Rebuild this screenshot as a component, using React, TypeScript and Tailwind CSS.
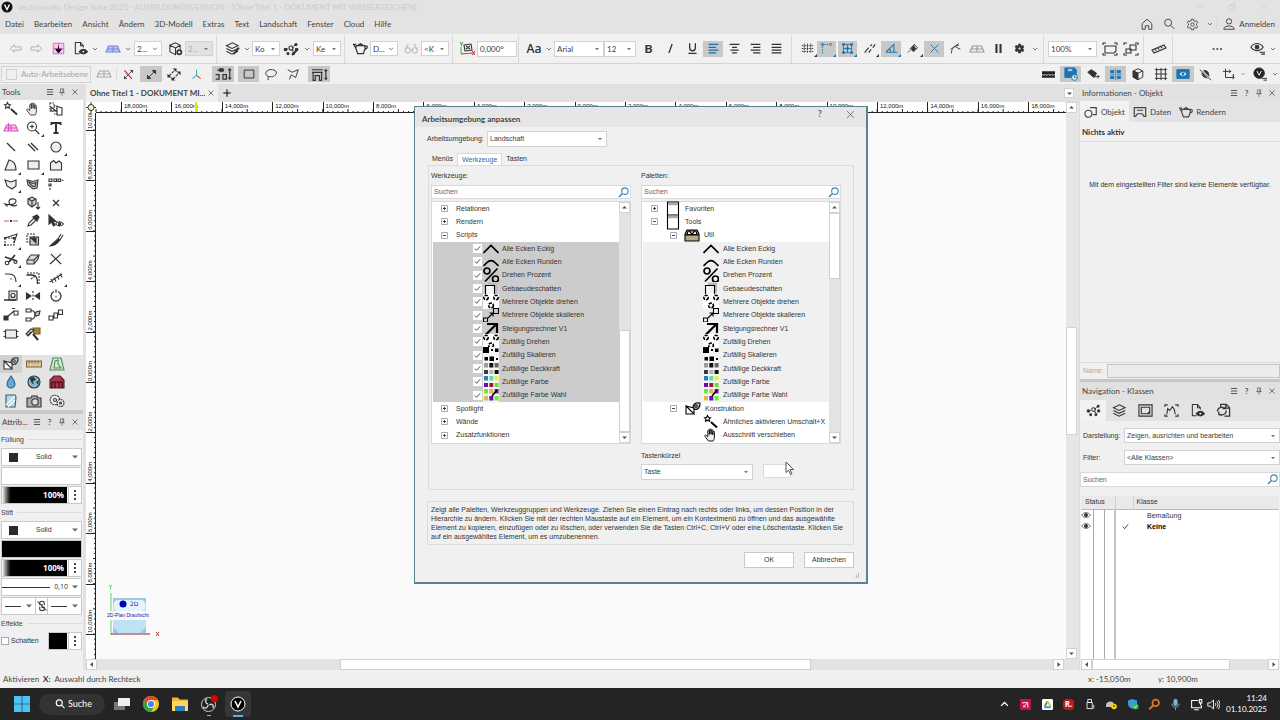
import { ReactNode, useState } from "react";
import clsx from "clsx";

const ui = "font-['Lato','Open_Sans',sans-serif]";
const small = "font-['Liberation_Sans',Arial,sans-serif]";

function Icon({
  children,
  className = "size-4",
}: {
  children: ReactNode;
  className?: string;
}) {
  return (
    <svg
      viewBox="0 0 16 16"
      fill="none"
      stroke="currentColor"
      strokeWidth="1.1"
      className={clsx("shrink-0", className)}
      aria-hidden="true"
    >
      {children}
    </svg>
  );
}

/* ---------- drawings ---------- */

const art = {
  plane: <path d="M3.500 5h9l2.500 6H1zM8 5v6M2.500 8h11" />,
  search: <path d="M7 2.500a4 4 0 1 0 0 8 4 4 0 1 0 0-8zM10 9.500l4 4" />,
  wand: (
    <>
      <path d="M4.500 1.500l1 2 2 .2-1.500 1.500.5 2-2-1-2 1 .5-2L1.500 3.700l2-.2z" />
      <path d="M8 8l6 5.500" strokeWidth="2" />
    </>
  ),
  hand: (
    <path
      d="M5.500 14L2 9.500c-.8-1.200.6-2 1.500-1l1.300 1.200V4c0-1.200 1.500-1.200 1.600 0V7.500 2.800c0-1.200 1.600-1.200 1.700 0V7.300 3.300c0-1.100 1.600-1.100 1.700 0V7.800 5c0-1.100 1.600-1.100 1.600 0V10c0 2-.6 3-1.200 4z"
      fill="#eee"
      strokeWidth=".9"
    />
  ),
  zoomIn: <path d="M7 2a4.500 4.500 0 1 0 0 9 4.500 4.500 0 1 0 0-9zM10.300 10l4 4M7 4.500v4M5 6.500h4" />,
  construct: (
    <>
      <path d="M1 5l8 8V7zM1 5v8h8" fill="#fff" />
      <path d="M8 6c0-3 3-5 7-4 .5 4-2 7-5 6.500z" fill="#a9c9d6" />
      <circle cx="11" cy="5" r="1.300" fill="#fff" />
    </>
  ),
  teapot: <path d="M4 6h8l-1 6.500H5zM4 7L1.500 5M4.500 9.500L1 6M12 7c3-1.500 3.500 2 .5 3M5 5.500c1-2.500 5-2.500 6 0M8 2.500v1" />,
  bigTeapot: <path d="M3.500 5h9l.5 3-2 5.500H5L3 8zM3 7.500L.5 3.500h3M13 5.500c3-1 3 2.500 0 3.500M5.500 4.500c1-1.500 4-1.500 5 0M8 2v1.500" strokeWidth="1.300" />,
  layers: <path d="M1.500 5L8 2l6 3-6.500 3zM1.500 8l6 3L14 8M1.500 11l6 3 6.500-3" />,
  classes: (
    <>
      <path d="M3 8l3 0M9 7l4-4M9 9l3 3" strokeDasharray="2 1" />
      <circle cx="2.500" cy="8.500" r="1.300" fill="currentColor" />
      <circle cx="8" cy="7" r="2" />
      <circle cx="13" cy="3.500" r="1" fill="currentColor" />
      <circle cx="13.500" cy="8.500" r="1.200" fill="currentColor" />
      <circle cx="5" cy="12.500" r="1" fill="currentColor" />
      <circle cx="10.500" cy="12.500" r="1" fill="currentColor" />
    </>
  ),
  docEye: (
    <>
      <path d="M7 13.500H2.500v-12H8l3 3.500v2" />
      <path d="M8 1.500v3.500h3" />
      <path d="M6.500 11.500c2.500-3.500 6.500-3.500 9 0-2.500 3-6.500 3-9 0z" fill="currentColor" />
      <circle cx="11" cy="11.300" r="1" fill="#fff" stroke="none" />
    </>
  ),
  gear: (
    <path
      d="M6.700 1.500h2.600l.4 2 1.500.8 1.900-.8 1.300 2.200-1.500 1.400v1.800l1.500 1.400-1.300 2.200-1.900-.8-1.500.8-.4 2H6.700l-.4-2-1.500-.8-1.900.8-1.300-2.200 1.500-1.400V7.100L1.600 5.700l1.300-2.200 1.900.8 1.500-.8zM8 6a2 2 0 1 0 0 4 2 2 0 1 0 0-4z"
      fillRule="evenodd"
    />
  ),
  book: (
    <>
      <path d="M2.500 1h11v14h-11z" fill="#fff" />
      <path d="M3 3h10" stroke="#aaa" strokeWidth="2.500" />
    </>
  ),
  chest: (
    <>
      <path d="M1 7l2-4h10l2 4v7H1z" fill="#b9a982" />
      <path d="M4 4h8l1 3.500H3z" fill="#fff" />
      <path d="M5 4l3 3 3-3M1 8h14" />
    </>
  ),
  eye: (
    <>
      <path d="M1 8c3.500-5 10.500-5 14 0-3.500 5-10.500 5-14 0z" />
      <circle cx="8" cy="8" r="2.600" fill="currentColor" />
    </>
  ),
};

type Tool = { name: string; art: ReactNode; more?: boolean };

const tools: Tool[] = [
  { name: "Ähnliches aktivieren", art: art.wand },
  { name: "Ausschnitt verschieben", art: art.hand },
  { name: "Aktivieren", art: <><path d="M2 2h4v8H2zM6 5h3v8H5.500" strokeDasharray="1.500 1" /><path d="M9 5.500l5 1.500v7H9zM3 6l5 4H3z" fill="#fff" /></> },
  { name: "Arbeitsebene", art: <g stroke="#e04fc0"><path d="M3.500 5h9l2.500 6H1zM5.500 3v8M8 5v6M2.500 8h11" fill="#f9c6ee" /></g> },
  { name: "Zoom", art: art.zoomIn, more: true },
  { name: "Text", art: <path d="M3.500 5V3h9v2M8 3v10M5.500 13h5" strokeWidth="2" /> },
  { name: "Linie", art: <path d="M4 4l8 8" strokeWidth="1.300" /> },
  { name: "Doppellinie", art: <path d="M3 5l7 7M6 4l7 7" strokeWidth="1.300" /> },
  { name: "Kreis", art: <circle cx="8" cy="8" r="5" fill="#eee" />, more: true },
  { name: "Bogen", art: <path d="M2 13L6 3c5 1 7 5 7 10z" fill="#eee" />, more: true },
  { name: "Rechteck", art: <path d="M3 4h11v8H3z" fill="#eee" />, more: true },
  { name: "Polygon", art: <path d="M2.500 13V6l3-2.500L8 6l3-2 2.500 2v7z" fill="#eee" /> },
  { name: "Polylinie", art: <path d="M2 4l6 2 5-2v6l-4 3-5-3z" fill="#eee" />, more: true },
  { name: "Doppelpolygon", art: <path d="M2 4l6 1.500 5-1.500-1 8-4 1-5-4zM4 6l4 1.500L11 6.500l-1 4H8L5.500 8.500z" fill="#ccc" /> },
  { name: "Dokumentpfad", art: <path d="M1 3h3v2.500H1zM6 3h2.500v2.500H6zM10 3h2.500v2.500H10zM13.500 4.300h2M1 8h2v2H1zM2 12v2" /> },
  { name: "Freihand", art: <path d="M14 10c-3 2-8 0-8-3 0-4 7-4 7-1 0 4-7 4-11 3l2.500 2.500" /> },
  { name: "Verteilen", art: <><path d="M3 4l4-2 4 2v5l-4 3-4-3z" fill="#ccc" /><path d="M7 6v6M3 4l4 2 4-2M13 7v7M11 12l2 2 2-2" /></> },
  { name: "Fixpunkt", art: <path d="M5 5l6 6M11 5l-6 6" strokeWidth="1.300" /> },
  { name: "Hilfslinie", art: <><path d="M1 8h5M10 8h5" stroke="#d649ae" /><path d="M7 8h2" strokeWidth="2" /></> },
  { name: "Pipette", art: <><path d="M3 13l1-3 5-5 2 2-5 5z" /><path d="M8 4l4 4 2-4-2-2z" fill="currentColor" /></> },
  { name: "Sichtbarkeit", art: <><path d="M1 2v9l2.500-2 2 4 1.500-1-2-3.500h3z" fill="currentColor" /><path d="M7.500 11c2-3 5.500-3 8 0-2 2.500-6 2.500-8 0z" fill="#fff" /><circle cx="11.500" cy="11" r="1.200" fill="currentColor" /></> },
  { name: "Umformen", art: <><path d="M2 6h9v7H2z" strokeDasharray="2 1" /><path d="M2 6l12-4-3 9" /><path d="M1 5h2v2H1zM10 5h2v2h-2zM1 12h2v2H1z" fill="currentColor" stroke="none" /></>, more: true },
  { name: "Ausschneiden", art: <><path d="M2 2h7v8H2z" strokeDasharray="2 1" /><path d="M5 5h8.500v8H5z" fill="#ccc" /><path d="M6 6h5v5z" fill="currentColor" /></> },
  { name: "Messer", art: <><path d="M2 14l8-7 2 1c-3 4-6 6-10 6z" fill="currentColor" /><path d="M10 7l3-5M12 8l3-5" /></> },
  { name: "Schere", art: <><path d="M2 6l12 4M12 4L6 11" strokeWidth="1.800" /><circle cx="4" cy="12" r="1.800" /><circle cx="12.500" cy="11" r="1.500" /></>, more: true },
  { name: "Radierer", art: <><path d="M2 9l4-5h8l-1 4-4 5H2z" fill="#ddd" /><path d="M2 9h7l5-5M9 9v4" /></> },
  { name: "Trimmen", art: <path d="M3 3l10 10M13 3L2 13" /> },
  { name: "Abrunden", art: <><path d="M2 4h4c5 0 7 3 7 8" strokeWidth="1.200" /><path d="M7.500 9h1" strokeWidth="1.500" /></>, more: true },
  { name: "Fase", art: <><path d="M1.500 5h5c5 0 6 3 6 9" strokeWidth="1.300" /><path d="M2 3h12v11M6 9l4-3" strokeDasharray="2 1" /></> },
  { name: "Teilen", art: <path d="M1.500 12L14 4M3 9l2 4M6 7.500l2 4M9 5.500l2 4M12 3.500l2 4" />, more: true },
  { name: "Maßband", art: <><path d="M6 3h8v9H6z" fill="#ddd" /><path d="M1 12h12" strokeWidth="1.500" /><circle cx="10" cy="7.500" r="2" fill="#fff" /></> },
  { name: "Spiegeln", art: <><path d="M1.500 5v6L6 8zM14.500 5v6L10 8z" fill="currentColor" /><path d="M8 3v10" strokeDasharray="2 1.500" /></> },
  { name: "Rotieren", art: <path d="M10 3.500a5 5 0 1 1-4 0M8 1.500v3M7.500 8.500h1" strokeWidth="1.300" /> },
  { name: "Verschieben", art: <><path d="M4 10l7-6" /><path d="M1 9h4v4H1z" fill="currentColor" /><path d="M11 4h4v4h-4zM9 1.500h3" /></> },
  { name: "Verbinden", art: <><path d="M1 2h5v3H1zM1 11h5v3H1zM6 3.500c3 0 4 2 4 4.500S8 12.500 6 12.500" /><path d="M10 8l1-3 4-1-1 4-3 1z" fill="#ccc" /></> },
  { name: "Pfadduplikat", art: <path d="M1 9h4v4H1zM6 6h3.500v5H6zM10.500 3h4v4.500h-4zM5 11l1.500-1M9.500 8l1-1" /> },
  { name: "Symbol", art: <><path d="M2.500 4h11v8h-11z" fill="#eee" /><path d="M1.500 5v1M1.500 10v1M14.500 5v1M14.500 10v1" strokeWidth="2" /></> },
  { name: "Attribute übertragen", art: <><path d="M8 2h7v6H9z" fill="#a8843a" stroke="#775a20" /><path d="M1 8l5-5 3 1-6 6zM3 9l3-3" fill="#eee" /><path d="M8 8l5 6" strokeWidth="2" /></> },
];

const toolSets: Tool[] = [
  { name: "Konstruktion", art: art.construct },
  { name: "Bemaßung", art: <><path d="M.5 5h15v6H.5z" fill="#dcc79a" stroke="#7b6534" /><path d="M3 5v2.500M6 5v2.500M9 5v2.500M12 5v2.500" stroke="#7b6534" /></> },
  { name: "Landschaft", art: <path d="M4 2h8l3 12H1zM5 12l1-7 3-1v4l3 4z" fill="#d5ead5" stroke="#4d8a55" /> },
  { name: "Wasser", art: <path d="M8 2c2 3 4 5 4 8a4 4 0 0 1-8 0c0-3 2-5 4-8z" fill="#5fa8d8" stroke="#2e6387" /> },
  { name: "GIS", art: <><circle cx="8" cy="8" r="6" fill="#8ab9d3" /><path d="M4 4l4-1 2 3-3 1 1 4-3-3zM10 8l3-2-1 5z" fill="#1d3a4a" stroke="none" /></> },
  { name: "Gebäude", art: <><path d="M1 14V6l4-4h6l4 4v8z" fill="#a8384a" stroke="#5b1622" /><path d="M3 14V8h3v6M10 14V8h3v6M6 8h4" stroke="#3b0a12" /></> },
  { name: "Fenster", art: <><path d="M3 2h9l1 2-1 10H3z" fill="#b5d9ea" stroke="#355c70" /><path d="M3 12l9-9M5 14l7-7" stroke="#fff" /></> },
  { name: "Visualisierung", art: <><path d="M1 5h4l1-2h5l1 2h3v9H1z" fill="#aaa" /><circle cx="9" cy="9" r="3.200" fill="#ddd" /></> },
  { name: "Maschinenbau", art: <g fill="#eee"><circle cx="6" cy="7" r="4.800" strokeDasharray="2 .7" /><circle cx="11.500" cy="10" r="3.500" strokeDasharray="2 .7" /><circle cx="6" cy="7" r="1.500" /><circle cx="11.500" cy="10" r="1" /></g> },
];

const swatches: Record<string, string[]> = {
  opacity: ["#9b9b9b", "#111", "#666", "#3b3b3b", "#b5b5b5", "#111"],
  color: ["#2f78c4", "#55e0b4", "#e6ef4a", "#6a0dad", "#b01030", "#62df45"],
  pick: ["#62ef35", "#e2b350", "#7a0fb0", "#e2b350", "#6a0dad", "#62ef35"],
};

const Swatches = ({ colors }: { colors: string[] }) => (
  <g stroke="none">
    <rect width="16" height="16" fill="#f6f6f6" />
    {colors.map((fill, i) => (
      <rect key={i} x={1 + (i % 3) * 5.3} y={i < 3 ? 2 : 9} width="4" height="4.500" fill={fill} />
    ))}
  </g>
);

const rings = (
  <g>
    <rect width="16" height="16" fill="#fff" stroke="none" />
    <circle cx="3" cy="3.500" r="2.200" strokeWidth="1.600" strokeDasharray="3 1" />
    <circle cx="13" cy="3.500" r="2.200" strokeWidth="1.600" strokeDasharray="3 1" />
    <circle cx="8" cy="11.500" r="2.400" strokeWidth="1.600" strokeDasharray="3 1" />
  </g>
);

const scripts: Tool[] = [
  { name: "Alle Ecken Eckig", art: <path d="M.5 12L8 4.500l7.500 7.500" strokeWidth="1.700" /> },
  { name: "Alle Ecken Runden", art: <path d="M.5 12l3.500-3.500c2.500-2.500 5.500-2.500 8 0l3.500 3.500" strokeWidth="1.700" /> },
  { name: "Drehen Prozent", art: <g strokeWidth="1.700"><circle cx="4" cy="4" r="3" /><circle cx="12.500" cy="12" r="3" /><path d="M14.500 1.500L2 14.500" /></g> },
  { name: "Gebaeudeschatten", art: <><path d="M5 1.500h9v10H5z" fill="#bbb" stroke="none" /><path d="M2.500 4.500h9v9h-9z" fill="#f5f5f5" /></> },
  { name: "Mehrere Objekte drehen", art: rings },
  { name: "Mehrere Objekte skalieren", art: <><path d="M.5 11h4v4h-4zM10.500 1.500h5v5h-5z" /><path d="M5 11l5-5M6.500 6H10v3.500" /></> },
  { name: "Steigungsrechner V1", art: <path d="M2 14.500L13 3.500M4 3h10v9" strokeWidth="2.200" /> },
  { name: "Zufällig Drehen", art: rings },
  { name: "Zufällig Skalieren", art: <g stroke="none"><rect width="16" height="16" fill="#f6f6f6" /><path d="M0 0h6v6H0zM8 2h2v2H8zM12 1.500h3.500v3.500H12zM1.500 10h3.500v3.500H1.500zM6.500 9.500h4.500v4.500H6.500zM13 11h2v2h-2z" fill="#000" /></g> },
  { name: "Zufällige Deckkraft", art: <Swatches colors={swatches.opacity} /> },
  { name: "Zufällige Farbe", art: <Swatches colors={swatches.color} /> },
  { name: "Zufällige Farbe Wahl", art: <><Swatches colors={swatches.pick} /><path d="M9 9l5-6" strokeWidth="1.600" /></> },
];

/* ---------- small controls ---------- */

function Slot({
  name,
  on,
  more,
  className = "w-5",
  children,
}: {
  name: string;
  on?: boolean;
  more?: boolean;
  className?: string;
  children: ReactNode;
}) {
  return (
    <button
      type="button"
      title={name}
      aria-label={name}
      className={clsx(
        "relative flex h-4 shrink-0 items-center justify-center",
        on && "bg-[#c8c8c8]",
        className
      )}
    >
      {children}
      {more && (
        <svg viewBox="0 0 4 4" className="absolute right-0 bottom-0 size-[3px]" aria-hidden="true">
          <path d="M4 0v4H0z" fill="currentColor" />
        </svg>
      )}
    </button>
  );
}

function Chevron({ className = "w-[10px]" }: { className?: string }) {
  return (
    <button type="button" aria-label="Mehr" className={clsx("flex h-4 shrink-0 items-center justify-center", className)}>
      <svg viewBox="0 0 8 8" className="size-2" fill="none" stroke="#777" aria-hidden="true">
        <path d="M2 3l2 2 2-2" />
      </svg>
    </button>
  );
}

const Sep = ({ className = "" }: { className?: string }) => (
  <span className={clsx("w-px shrink-0 bg-[#dadada]", className)} />
);

function Drop({
  name,
  value,
  className,
  id,
  caret = true,
  disabled,
}: {
  name?: string;
  value: string;
  className?: string;
  id?: string;
  caret?: boolean;
  disabled?: boolean;
}) {
  return (
    <span className={clsx("relative block shrink-0", className)}>
      <select
        id={id}
        aria-label={name}
        disabled={disabled}
        className="block size-full appearance-none border border-[#d2d2d2] bg-white pr-2 pl-[2px] text-[#3c3c3c] disabled:bg-[#e2e2e2] disabled:text-[#aaa]"
      >
        <option>{value}</option>
      </select>
      <svg viewBox="0 0 6 4" className="pointer-events-none absolute top-1/2 right-1 h-1 w-[6px] -translate-y-1/2" aria-hidden="true">
        {caret ? (
          <path d="M1 1h4L3 3.200z" fill="#777" />
        ) : (
          <path d="M1 .8l2 2 2-2" fill="none" stroke="#777" />
        )}
      </svg>
    </span>
  );
}

function ScrollButton({ dir, className = "size-[11px]" }: { dir: "up" | "down" | "left" | "right"; className?: string }) {
  const d = {
    up: "M2 5.500h5L4.500 3z",
    down: "M2 3.500h5L4.500 6z",
    left: "M6 2v5L3 4.500z",
    right: "M3.500 2v5l3-2.500z",
  }[dir];
  return (
    <button type="button" aria-label={dir} className={clsx("flex shrink-0 items-center justify-center border border-[#d2d2d2] bg-white", className)}>
      <svg viewBox="0 0 9 9" className="size-[9px] shrink-0" aria-hidden="true">
        <path d={d} fill="#555" />
      </svg>
    </button>
  );
}

function PanelHeader({ title, help, className }: { title: string; help?: boolean; className?: string }) {
  return (
    <div className={clsx("flex shrink-0 items-center bg-[#e1e1e1] pr-[2px] pl-[2px] text-[8px] text-[#444]", className)}>
      <h2 className="min-w-0 flex-1 whitespace-nowrap">{title}</h2>
      <Slot name="Menü" className="w-3">
        <Icon className="size-[10px]"><path d="M3 4h10M3 8h10M3 12h10" strokeWidth="1.400" /></Icon>
      </Slot>
      {help && (
        <Slot name="Hilfe" className="w-[13px]">
          <span className="font-bold text-[#555]">?</span>
        </Slot>
      )}
      <Slot name="Anheften" className="w-3">
        <Icon className="size-[10px] text-[#666]"><path d="M5.500 3h5v6h-5zM3.500 9h9M8 9v5M9.500 3v6" strokeWidth="1.200" /></Icon>
      </Slot>
      <Slot name="Schließen" className="w-[13px]">
        <Icon className="size-[10px] text-[#555]"><path d="M4 4l8 8M12 4l-8 8" strokeWidth="1.300" /></Icon>
      </Slot>
    </div>
  );
}

function SearchBox({ name, className }: { name: string; className?: string }) {
  return (
    <div className={clsx("flex items-center border border-[#d9d9d9] bg-white", className)}>
      <input type="search" aria-label={name} placeholder="Suchen" className="min-w-0 flex-1 pl-[2px] outline-none placeholder:text-[#666]" />
      <svg viewBox="0 0 12 12" className="mr-px size-[11px]" fill="none" stroke="#3c86b4" strokeWidth="1.200" aria-hidden="true">
        <circle cx="7.500" cy="4.500" r="3.500" />
        <path d="M5 7l-4 4" strokeWidth="1.600" />
      </svg>
    </div>
  );
}

/* ---------- window chrome ---------- */

const menus = ["Datei", "Bearbeiten", "Ansicht", "Ändern", "3D-Modell", "Extras", "Text", "Landschaft", "Fenster", "Cloud", "Hilfe"];

function TitleAndMenu() {
  return (
    <header className="shrink-0 bg-[#e3e3e3] text-[#444]">
      <div className="flex h-[14px] items-center pr-3 pl-px text-[#cbcbcb]">
        <svg viewBox="0 0 12 12" className="mr-1 size-3" aria-hidden="true">
          <circle cx="6" cy="6" r="5.500" fill="#111" />
          <path d="M3.500 3.500L6 8.500l2.500-5" fill="none" stroke="#fff" strokeWidth="1.400" />
        </svg>
        <h1 className="flex-1 truncate">
          Vectorworks Design Suite 2025 - AUSBILDUNGSVERSION - [Ohne Titel 1 - DOKUMENT MIT WASSERZEICHEN]
        </h1>
        <div className="flex gap-6">
          <button type="button" aria-label="Minimieren"><Icon className="size-2"><path d="M3 8h10" /></Icon></button>
          <button type="button" aria-label="Verkleinern"><Icon className="size-2"><path d="M2 5h9v9H2zM5 5V2h9v9h-3" /></Icon></button>
          <button type="button" aria-label="Schließen"><Icon className="size-2"><path d="M2 2l12 12M14 2L2 14" /></Icon></button>
        </div>
      </div>
      <div className="flex h-5 items-center pr-[5px] pl-[5px]">
        <nav className="flex flex-1 gap-[10px]">
          {menus.map((menu) => (
            <button key={menu} type="button">{menu}</button>
          ))}
        </nav>
        <Slot name="Startseite" className="w-[22px]"><Icon className="size-[14px]"><path d="M2.500 7.500L8 2.500l5.500 5V14H10v-4H6v4H2.500z" /></Icon></Slot>
        <Slot name="Suchen" className="w-[22px]"><Icon className="size-[14px]">{art.search}</Icon></Slot>
        <Slot name="Einstellungen" className="w-[25px]"><Icon className="size-[13px]">{art.gear}</Icon></Slot>
        <Chevron />
        <Sep className="mr-[5px] ml-px h-3" />
        <button type="button" className="flex items-center gap-[3px]">
          <Icon className="size-[14px]"><circle cx="8" cy="5" r="3" /><path d="M2 14c0-5 12-5 12 0z" /></Icon>
          Anmelden
        </button>
      </div>
    </header>
  );
}

const lines = (d: string) => <Icon className="size-[13px]"><path d={d} strokeWidth="1.600" /></Icon>;

function MainToolbar() {
  return (
    <div role="toolbar" aria-label="Darstellung" className="flex h-[30px] shrink-0 items-center border-b border-[#d4d4d4] bg-[#f1f1f1] pl-[5px] text-[#333]">
      <Slot name="Zurück" className="w-[21px] text-[#aaa]"><Icon className="size-[13px]"><path d="M1.500 8l5-4.500V6h8v4h-8v2.500z" /></Icon></Slot>
      <Slot name="Vor" className="w-[21px] text-[#aaa]"><Icon className="size-[13px]"><path d="M14.500 8l-5-4.500V6h-8v4h8v2.500z" /></Icon></Slot>
      <Slot name="Ebene sichern" className="w-[23px]"><Icon className="size-[13px]"><path d="M1.500 1.500h13v13h-13zM8 1.500V6M1.500 8h13" fill="#f8c8ee" stroke="#e060c0" /><path d="M8 5v6M4.500 9L8 13.500 11.500 9z" fill="#111" stroke="#111" strokeWidth="1.200" /></Icon></Slot>
      <Slot name="Dokument anzeigen"><Icon className="size-[15px]">{art.docEye}</Icon></Slot>
      <Chevron />
      <Slot name="Arbeitsebene" className="ml-[3px] w-5"><Icon><g stroke="#7487d8" fill="#b9c7f4">{art.plane}</g></Icon></Slot>
      <Chevron />
      <Drop name="Ebene" value="2..." caret={false} className="ml-px h-[15px] w-7" />
      <Slot name="3D" className="ml-[3px] w-5"><Icon className="size-[15px]"><path d="M2 4.500L8 2l5 2.500V9M2 4.500v7l6 3V7.500zM8 7.500l5-3" /><circle cx="12" cy="12" r="2.300" strokeWidth="1.800" /></Icon></Slot>
      <Drop name="3D Ansicht" value="2..." disabled className="h-[15px] w-7" />
      <Sep className="mr-[5px] ml-[3px] h-7" />
      <Slot name="Ebenen"><Icon className="size-[15px]">{art.layers}<path d="M9 14l6-7" strokeWidth="2" /></Icon></Slot>
      <Chevron />
      <Drop name="Konstruktionsebene" value="Ko" className="h-[15px] w-7" />
      <Slot name="Klassen" className="ml-px w-5"><Icon>{art.classes}<path d="M9 14l6-6" strokeWidth="2" /></Icon></Slot>
      <Chevron className="w-[11px]" />
      <Drop name="Klasse" value="Ke" className="ml-px h-[15px] w-7" />
      <Sep className="mr-[5px] ml-[3px] h-7" />
      <Slot name="Rendern"><Icon className="size-[15px]">{art.bigTeapot}</Icon></Slot>
      <Drop name="Darstellungsart" value="D..." caret={false} className="h-[15px] w-7" />
      <Slot name="Stil" className="ml-[3px] w-5 text-[#bbb]"><Icon className="size-[15px]"><circle cx="4" cy="10" r="2.700" /><circle cx="11.500" cy="10" r="2.700" /><path d="M1.500 9l3-6M14 9l-3-6M6.500 10h2" /></Icon></Slot>
      <Drop name="Stilklasse" value="<K" className="h-[15px] w-7" />
      <Sep className="mr-[4px] ml-[3px] h-7" />
      <Slot name="Plandrehung"><Icon><path d="M5 4l7-1 1 6-7 1zM7 5l4 3M11 5L7 8" /><path d="M2 6v7" stroke="#4ab54a" /><path d="M2 13l11-1" stroke="#d43a3a" /><path d="M1 1l1.500 2L4 1M2.500 3v2" stroke="#4ab54a" /><path d="M13 10l3 4M16 10l-3 4" stroke="#d43a3a" /></Icon></Slot>
      <input aria-label="Drehwinkel" defaultValue="0,000°" className="h-4 w-10 shrink-0 border border-[#cfcfcf] bg-white pl-[2px]" />
      <Sep className="mr-[5px] ml-px h-7" />
      <Slot name="Schrift"><span className="font-['Open_Sans',sans-serif] text-[12px] font-semibold">Aa</span></Slot>
      <Chevron />
      <Drop name="Schriftart" value="Arial" className="h-4 w-[50px]" />
      <Drop name="Schriftgröße" value="12" className="h-4 w-8" />
      <Slot name="Fett" className="ml-[2px] w-[21px] text-[12px]"><b className="font-black">B</b></Slot>
      <Slot name="Kursiv" className="w-[22px]">{lines("M10 2.500L6 13.500")}</Slot>
      <Slot name="Unterstrichen" className="w-[22px]">{lines("M4.500 1.500V7c0 5 7 5 7 0V1.500M3 14h10")}</Slot>
      <Slot name="Linksbündig" on className="w-5 text-[#1c6ea8]">{lines("M2 3h12M2 6.500h9M2 10h12M2 13.500h9")}</Slot>
      <Slot name="Zentriert" className="ml-px w-[21px]">{lines("M2 3h12M5 6.500h6M3 10h10M5 13.500h6")}</Slot>
      <Slot name="Rechtsbündig" className="w-[21px]">{lines("M2 3h12M5 6.500h9M2 10h12M5 13.500h9")}</Slot>
      <Slot name="Blocksatz" className="w-[21px]">{lines("M2 3h12M2 6.500h12M2 10h12M2 13.500h12")}</Slot>
      <Sep className="mr-[5px] ml-[4px] h-7" />
      <Slot name="Raster" more><Icon className="size-[13px]"><path d="M4 2v12M8 2v12M12 2v12M1 4.500h14M1 8h14M1 11.500h14" strokeDasharray="2 1" /></Icon></Slot>
      <Slot name="Objekt fangen" on more className="w-[19px] text-[#1c75b0]"><Icon className="size-[13px]"><path d="M3 14V3h9" strokeDasharray="2 1.200" /><circle cx="3" cy="3" r="1.500" /><circle cx="13" cy="3" r="1.300" /></Icon></Slot>
      <Slot name="Kanten fangen" on more className="ml-[2px] w-[19px] text-[#1c75b0]"><Icon className="size-[13px]"><path d="M3 3h10v10H3zM8 3v10M3 8h10" /><path d="M2 2h2v2H2zM12 2h2v2h-2zM2 12h2v2H2zM12 12h2v2h-2zM7 7h2v2H7z" fill="currentColor" /></Icon></Slot>
      <Slot name="Verlängerung fangen" more className="ml-[2px] w-[20px]"><Icon className="size-[13px]"><path d="M2 13l5-6M9 5l2-2M7 13l3-4M12 7l3-4" strokeWidth="1.400" /></Icon></Slot>
      <Slot name="Winkel fangen" on more className="ml-[2px] w-[20px] text-[#1c75b0]"><Icon className="size-[13px]"><path d="M1 12.500h14M1.500 12L11 3v9M5 9c2 0 2 2 2 3" strokeWidth="1.300" /></Icon></Slot>
      <Slot name="Punkt fangen" more className="ml-[2px] w-[20px]"><Icon className="size-[13px]"><path d="M4 8l5-5 4 4-5 5zM1 13l3-3M9 3l-2 8" /><path d="M8 5l3 3-3 3-3-3z" fill="currentColor" /></Icon></Slot>
      <Slot name="Schnittpunkt fangen" on className="ml-px w-5 text-[#1c75b0]"><Icon className="size-[13px]"><path d="M3 3l10 10M13 3L3 13" /></Icon></Slot>
      <Slot name="Tangente fangen" className="w-[22px]"><Icon className="size-[13px]"><path d="M3 14c0-5 2-9 9-10M2 9l10-7M8 6l6 3" /></Icon></Slot>
      <Slot name="Ebene fangen" className="w-[22px] text-[#999]"><Icon>{art.plane}</Icon></Slot>
      <Slot name="Pause" className="w-[21px]"><Icon className="size-[13px]"><path d="M5.500 2.500v11M10.500 2.500v11" strokeWidth="2.600" /></Icon></Slot>
      <Slot name="Einstellungen" className="w-[21px]"><Icon className="size-[11px]"><g fill="currentColor">{art.gear}</g></Icon></Slot>
      <Chevron />
      <Sep className="mr-[4px] ml-[3px] h-7" />
      <Drop name="Zoomfaktor" value="100%" className="h-4 w-[49px]" />
      <Slot name="Plangröße" className="ml-[2px] w-[21px]"><Icon><path d="M3 5h11v5l-2 2H3z" /><path d="M1 4V2h3M12 2h3v2M1 12v2h3M15 12v2h-3" /></Icon></Slot>
      <Slot name="Objekte zeigen" className="w-[21px]"><Icon><path d="M7 4h6v5H7zM3 8h5v4H3z" /><path d="M1 4V2h3M12 2h3v2M1 12v2h3M15 12v2h-3" /></Icon></Slot>
      <Sep className="mr-[5px] ml-[2px] h-7" />
      <Slot name="Maßstab"><Icon><path d="M1 9l12-5 2 3L3 12zM4 8l1 1.500M7 7l1 1.500M10 5.500l1 1.500" fill="#ddd" /></Icon></Slot>
      <Sep className="ml-[3px] h-7" />
      <Slot name="Mehr" className="ml-auto w-5"><Icon className="size-[10px]"><path d="M1 8h3M7 8h3M13 8h3" strokeWidth="2.500" /></Icon></Slot>
      <Slot name="Sichtbarkeit" className="ml-5 w-5"><Icon className="size-[15px]"><path d="M1 6.500c3.500-5 9.500-5 13 0-3.500 5-9.500 5-13 0z" /><circle cx="7.500" cy="6.500" r="2" fill="currentColor" /><path d="M10 12h6M12 14h4" /></Icon></Slot>
      <Chevron className="mr-[2px] w-[11px]" />
    </div>
  );
}

function ModeBar() {
  return (
    <div role="toolbar" aria-label="Methoden" className="flex h-5 shrink-0 items-center bg-[#f0f0f0] pl-px text-[#333]">
      <label className="flex h-[17px] w-[90px] shrink-0 items-center gap-1 border border-[#d4d4d4] pl-1 text-[#a5a5a5]">
        <input type="checkbox" disabled className="size-[11px] shrink-0 appearance-none border border-[#d0d0d0]" />
        <span className="whitespace-nowrap">Auto-Arbeitsebene</span>
      </label>
      <Slot name="Arbeitsebene" className="ml-[3px] w-5 text-[#aaa]"><Icon>{art.plane}</Icon></Slot>
      <Sep className="mr-px ml-[2px] h-3" />
      <Slot name="Ohne Punkte" className="w-[21px]"><Icon className="size-[13px]"><path d="M3 13L13 3M10 3h3v3M3 10v3h3" /><path d="M3 3l9 10" stroke="#cc2424" strokeWidth="1.500" /></Icon></Slot>
      <Slot name="Einzelpunkte" on className="ml-px w-[22px]"><Icon className="size-[13px]"><path d="M3 13L13 3" /><path d="M9 3h4v4zM3 9v4h4z" fill="currentColor" /></Icon></Slot>
      <Slot name="Mehrere Punkte" className="w-[23px]"><Icon><path d="M3 10l6-6M7 13l6-6" strokeDasharray="3 1" /><path d="M8 3h2v2zM12 6h2v2zM2 9v2h2zM6 12v2h2z" fill="currentColor" /></Icon></Slot>
      <Slot name="Achsen" className="w-[23px]"><Icon className="size-[13px]"><path d="M8 2v7" stroke="#2eb5a0" strokeWidth="1.300" /><path d="M8 9l-5 4" stroke="#4aa0e0" strokeWidth="1.300" /><path d="M8 9l5 4" stroke="#cc3a3a" strokeWidth="1.300" /></Icon></Slot>
      <Slot name="Verbunden" on className="ml-1 w-[22px]"><Icon className="size-[18px]"><path d="M1.500 8.500h3v4h-3M8 8.500h3v4H8zM3 4.500h6" /><path d="M5 3.500h3v2H5z" fill="currentColor" /><path d="M14 3.500v9M12.800 4.800L14 3.500l1.200 1.300M12.800 11.200l1.200 1.300 1.200-1.300" /></Icon></Slot>
      <Slot name="Rechteck" on className="ml-1 w-[21px]"><Icon className="size-[14px]"><path d="M2.500 3.500h11v9h-11z" /></Icon></Slot>
      <Slot name="Lasso" className="ml-px w-[22px]"><Icon className="size-[14px]"><path d="M5 11C-1 8 3 3 8 3s8 3 5 6-6 2-8 2c-1 2 1 2-1 4" /></Icon></Slot>
      <Slot name="Polygon" className="w-[22px]"><Icon className="size-[14px]"><path d="M2 3l5 3 7-3-3 9-5-3-2 5" /></Icon></Slot>
      <Slot name="Türen" on className="ml-1 w-[22px]"><Icon className="size-[17px]"><path d="M1 3.500h10M1 6h10M2 6v7.500h2V9h4v4.500h2V6" /><path d="M14 3.500v9M12.800 4.800L14 3.500l1.200 1.300M12.800 11.200l1.200 1.300 1.200-1.300" /></Icon></Slot>

      <Slot name="Hintergrund" className="ml-auto w-[23px]"><Icon className="size-[13px]"><path d="M0 4h16v8H0z" fill="#222" stroke="none" /><path d="M0 8l2 1 2-1 2 1 2-1 2 1 2-1 2 1 2-1" stroke="#ddd" /></Icon></Slot>
      <Slot name="Sichern" on className="w-[21px] text-[#1c75b0]"><Icon className="size-[14px]"><path d="M1 1h11l2 2v6h-3l-3 3H1z" fill="currentColor" /><path d="M4 2h6v3H4z" fill="#cde" /><circle cx="12" cy="12" r="3.300" fill="#e3eef5" /><path d="M12 10v2h2" /></Icon></Slot>
      <Slot name="Etikett" className="w-[23px]"><Icon className="size-[14px]"><path d="M2 6l4-3 6 4-3 5z" fill="currentColor" /><path d="M10 11h5M13 9l2 2-2 2" /></Icon></Slot>
      <Slot name="Teilung" on className="ml-px w-[21px] text-[#1c75b0]"><Icon className="size-[13px]"><path d="M2 3h4v3H2zM10 3h4v3h-4zM2 10h4v3H2zM10 10h4v3h-4z" fill="currentColor" /><path d="M8 1v14M1 8h14" strokeDasharray="2 1" /></Icon></Slot>
      <Slot name="Multi Ansicht" className="w-[23px]"><Icon className="size-[14px]"><path d="M2.500 4.500L8 2l5.500 2.500v7L8 14.500l-5.500-3zM2.500 4.500L8 7l5.500-2.500" /><path d="M2.500 4.500L8 7v7.500l-5.500-3z" fill="currentColor" /></Icon></Slot>
      <Slot name="Gitter" className="w-[23px]"><Icon className="size-[14px]"><path d="M1 3h14M1 8h14M1 13h14M3 1v14M8 1v14M13 1v14" /></Icon></Slot>
      <Slot name="Vorschau" on className="w-[22px] text-[#1c75b0]"><Icon className="size-[14px]"><path d="M1 3h14v10H1z" fill="currentColor" /><path d="M3.500 8c2.500-3.500 6.500-3.500 9 0-2.500 3.500-6.500 3.500-9 0z" fill="#fff" /><circle cx="8" cy="8" r="1.300" fill="currentColor" /></Icon></Slot>
      <Slot name="Unsichtbar" className="w-[23px]"><Icon className="size-[13px]"><path d="M4 4c6-3 9 2 8 8C5 13 3 8 4 4z" fill="currentColor" /><path d="M1 1l14 14" stroke="#f0f0f0" strokeWidth="2.500" /><path d="M1 2l14 13" /></Icon></Slot>
      <Slot name="Rahmen" className="w-[23px]"><Icon className="size-[14px]"><path d="M1 5h9M4 2v10h9V8M8 3l2 2-2 2M12 10l2 2-2 2" /></Icon></Slot>
      <Chevron className="w-[6px]" />
      <Slot name="Vectorworks" className="ml-[3px] w-[22px]"><Icon className="size-[14px]"><circle cx="7" cy="7" r="6" fill="#222" /><path d="M4.500 4.500L7 9.500l2.500-5" stroke="#fff" /><path d="M10 13h6M12 15h4" /></Icon></Slot>
      <Chevron className="mr-px w-[8px]" />
    </div>
  );
}

/* ---------- left column ---------- */

function ToolButton({ tool, active }: { tool: Tool; active?: boolean }) {
  return (
    <button
      type="button"
      title={tool.name}
      aria-label={tool.name}
      className={clsx("relative flex items-center justify-center", active && "bg-[#cfcfcf]")}
    >
      <Icon>{tool.art}</Icon>
      {tool.more && (
        <svg viewBox="0 0 4 4" className="absolute right-0 bottom-0 size-[3px]" aria-hidden="true">
          <path d="M4 0v4H0z" fill="#333" />
        </svg>
      )}
    </button>
  );
}

function GroupLabel({ children }: { children: ReactNode }) {
  return (
    <h3 className="flex h-[15px] items-center gap-1 text-[#444] after:h-px after:flex-1 after:bg-[#dcdcdc]">
      {children}
    </h3>
  );
}

const field = "flex h-[18px] shrink-0 border border-[#c9c9c9] bg-white";

function StyleSelect({ name }: { name: string }) {
  return (
    <div className={clsx(field, "relative items-center")}>
      <span className="ml-[7px] size-[9px] bg-[#2b2b2b]" />
      <select aria-label={name} className="h-full flex-1 appearance-none pl-[18px]">
        <option>Solid</option>
      </select>
      <svg viewBox="0 0 6 4" className="pointer-events-none absolute right-[3px] h-1 w-[6px]" aria-hidden="true"><path d="M0 .5h6L3 3.500z" fill="#666" /></svg>
    </div>
  );
}

const Dots = ({ name }: { name: string }) => (
  <button type="button" aria-label={name} className="flex w-[13px] shrink-0 items-center justify-center border-l border-[#c9c9c9] bg-white">
    <svg viewBox="0 0 2 12" className="h-3 w-[2px]" aria-hidden="true"><path d="M0 1h2v2H0zM0 5h2v2H0zM0 9h2v2H0z" fill="#444" /></svg>
  </button>
);

function Opacity({ name }: { name: string }) {
  return (
    <div className={field}>
      <button type="button" aria-label={name} className="mr-px flex flex-1 items-center justify-end bg-linear-to-r from-white via-black via-15% to-black pr-[3px] font-['Open_Sans'] text-[8px] font-bold text-white">
        100%
      </button>
      <Dots name={`${name} Optionen`} />
    </div>
  );
}

const Stroke = ({ className }: { className: string }) => <span className={clsx("h-px bg-[#333]", className)} />;
const Tri = () => <svg viewBox="0 0 6 4" className="h-1 w-[6px]" aria-hidden="true"><path d="M0 .5h6L3 3.500z" fill="#666" /></svg>;

function LeftColumn() {
  return (
    <aside className="flex w-[83px] shrink-0 flex-col bg-[#f0f0f0]">
      <PanelHeader title="Tools" className="h-4" />
      <div className="flex shrink-0 flex-col bg-white pb-3">
        <div className="grid h-[243px] auto-rows-fr grid-cols-[21px_23px_23px] text-[#333]">
          {tools.map((tool) => <ToolButton key={tool.name} tool={tool} />)}
        </div>
      </div>
      <div className="grid h-[55px] shrink-0 auto-rows-fr grid-cols-[22px_23px_23px] bg-[#e4e4e4] text-[#333]">
        {toolSets.map((tool, i) => <ToolButton key={tool.name} tool={tool} active={i === 0} />)}
      </div>
      <div className="h-1 shrink-0 bg-[#c9c9c9]" />
      <PanelHeader title="Attrib..." help className="h-4" />
      <section className={clsx("flex flex-1 flex-col gap-px px-px pt-[2px] text-[7px] text-[#333]", small)}>
        <GroupLabel>Füllung</GroupLabel>
        <StyleSelect name="Füllart" />
        <button type="button" aria-label="Füllfarbe" className={field} />
        <Opacity name="Deckkraft Füllung" />
        <GroupLabel>Stift</GroupLabel>
        <StyleSelect name="Stiftart" />
        <button type="button" aria-label="Stiftfarbe" className="h-[18px] border border-[#c9c9c9] bg-black" />
        <Opacity name="Deckkraft Stift" />
        <button type="button" className={clsx(field, "items-center gap-1 pr-[3px]")} aria-label="Liniendicke">
          <Stroke className="flex-1" />
          <span className="font-['Open_Sans'] text-[7px]">0,10</span>
          <Tri />
        </button>
        <div className={clsx(field, "items-stretch")}>
          <button type="button" aria-label="Linienanfang" className="flex flex-1 items-center justify-between px-[3px]"><Stroke className="w-4" /><Tri /></button>
          <button type="button" aria-label="Verknüpfen" className="flex w-[13px] items-center border-x border-[#c9c9c9]">
            <Icon className="size-3"><path d="M5 7V4c0-3 6-3 6 0v3M5 9v3c0 3 6 3 6 0V9M8 5v6M2 2l12 12" strokeWidth="1.400" /></Icon>
          </button>
          <button type="button" aria-label="Linienende" className="flex flex-1 items-center justify-between px-[3px]"><Stroke className="w-4" /><Tri /></button>
        </div>
        <GroupLabel>Effekte</GroupLabel>
        <div className="flex h-[18px] items-center">
          <label className="flex flex-1 items-center gap-[2px]">
            <input type="checkbox" className="size-[8px] appearance-none border border-[#aaa] bg-white" />
            Schatten
          </label>
          <div className={clsx(field, "w-[34px]")}>
            <button type="button" aria-label="Schattenfarbe" className="mr-px flex-1 bg-black" />
            <Dots name="Schatten Optionen" />
          </div>
        </div>
      </section>
    </aside>
  );
}

/* ---------- drawing area ---------- */

const pitch = 50.4;
const meters = (i: number, zero: number) => `${Math.abs(zero - i) * 2},000m`;

function RulerTop() {
  const start = 35;
  return (
    <svg className="h-[11px] w-full bg-white" aria-hidden="true">
      {Array.from({ length: 195 }, (_, i) => (
        <path key={i} d={`M${start - 25 + i * 5.04} ${i % 5 === 0 ? 7 : 9}v3`} stroke="#222" />
      ))}
      {Array.from({ length: 19 }, (_, i) => (
        <g key={i}>
          <path d={`M${Math.round(start + i * pitch) + 0.5} 0v11`} stroke="#222" />
          <text x={start + i * pitch + 3} y="6" className="text-[6px]" fill="#111">{meters(i, 9)}</text>
        </g>
      ))}
      <path d="M110 0v11" stroke="#e6ea00" strokeWidth="2" />
      <path d="M10 10.500h1200" stroke="#222" />
      <circle cx="5" cy="5.500" r="3" fill="#f6f7c8" stroke="#333" />
      <path d="M5 0v3M5 8v3M0 5.500h2M8 5.500h2" stroke="#333" />
    </svg>
  );
}

function RulerLeft() {
  const start = 17;
  return (
    <svg className="w-[10px] shrink-0 bg-white" aria-hidden="true">
      {Array.from({ length: 110 }, (_, i) => (
        <path key={i} d={`M${i % 5 === 2 ? 7 : 8} ${start - 10 + i * 5.04}h3`} stroke="#222" />
      ))}
      {Array.from({ length: 11 }, (_, i) => (
        <g key={i}>
          <path d={`M0 ${Math.round(start + i * pitch) + 0.5}h10`} stroke="#222" />
          <text transform={`translate(6 ${start + i * pitch - 1}) rotate(-90)`} className="text-[6px]" fill="#111">{meters(i, 5)}</text>
        </g>
      ))}
      <path d="M9.500 0v600" stroke="#222" />
    </svg>
  );
}

function Workspace() {
  return (
    <main className="flex min-w-0 flex-1 flex-col border-l-[3px] border-[#e1e1e1]">
      <div className="flex h-[18px] shrink-0 items-center bg-[#e1e1e1] pr-[5px]">
        <div className="flex h-full w-[132px] items-center justify-between bg-[#f0f0f0] pr-[3px] pl-1">
          <span className="font-bold whitespace-nowrap text-[#444]">Ohne Titel 1 - DOKUMENT MI...</span>
          <button type="button" aria-label="Tab schließen"><Icon className="size-2 text-[#555]"><path d="M3 3l10 10M13 3L3 13" strokeWidth="1.500" /></Icon></button>
        </div>
        <button type="button" aria-label="Neuer Tab" className="ml-1"><Icon className="size-[10px]"><path d="M8 2v12M2 8h12" strokeWidth="1.600" /></Icon></button>
        <ScrollButton dir="down" className="ml-auto size-[10px]" />
      </div>
      <div className="flex min-h-0 flex-1">
        <div className={clsx("flex min-w-0 flex-1 flex-col", small)}>
          <RulerTop />
          <div className="flex min-h-0 flex-1">
            <RulerLeft />
            <div className="flex flex-1 items-end bg-[#fafafa] pb-[21px] pl-[10px]">
              <svg viewBox="0 0 56 56" className="h-14 w-14 overflow-visible" aria-label="2D-Plan Draufsicht">
                <path d="M5 11v42" stroke="#63d663" />
                <path d="M3 3l1.500 2L6 3M4.500 5v2.500" stroke="#63d663" fill="none" />
                <path d="M7 16h33v35H7z" fill="#bfe1f4" />
                <path d="M7 45l6 6H7zM40 45l-6 6h6zM7 16h33v6l-5-4H12l-5 4z" fill="#94cbe8" />
                <rect x="8" y="18" width="31" height="11" rx="4" fill="#e8f4fb" />
                <path d="M0 29h46v9H0z" fill="#fafafa" />
                <circle cx="17" cy="22" r="3.500" fill="#0000c0" />
                <text x="24" y="24" className="font-['DejaVu_Sans'] text-[6px]" fill="#2020c0">2D</text>
                <text x="1" y="35" className="font-['Liberation_Sans'] text-[5px]" fill="#1414b0">2D-Plan Draufsicht</text>
                <path d="M5 52h39" stroke="#8a2030" />
                <path d="M50 50l3 4M53 50l-3 4" stroke="#d04040" />
              </svg>
            </div>
          </div>
        </div>
        <div className="flex w-[13px] shrink-0 flex-col bg-[#e6e6e6]">
          <ScrollButton dir="up" />
          <div className="flex-[215]" />
          <div className="w-[11px] flex-[106] border border-[#d2d2d2] bg-white" />
          <div className="flex-[214]" />
          <ScrollButton dir="down" />
        </div>
      </div>
      <div className="flex h-[11px] shrink-0 bg-[#e3e3e3] pr-[15px]">
        <ScrollButton dir="left" />
        <div className="flex-[244]" />
        <div className="flex-[470] border border-[#cfcfcf] bg-white" />
        <div className="flex-[243]" />
        <ScrollButton dir="right" />
      </div>
    </main>
  );
}

/* ---------- right column ---------- */

const infoTabs: Tool[] = [
  { name: "Objekt", art: <><circle cx="5" cy="10" r="4" strokeWidth="1.300" /><path d="M7 3h7v8h-4" strokeWidth="1.300" /></> },
  { name: "Daten", art: <path d="M1.500 3h13v10h-2l-2-3H5l-2 3H1.500zM4.500 6h7" strokeWidth="1.400" /> },
  { name: "Rendern", art: art.bigTeapot },
];

const navTabs: Tool[] = [
  { name: "Klassen", art: art.classes },
  { name: "Konstruktionsebenen", art: art.layers },
  { name: "Layoutebenen", art: <path d="M1 2h14v12H1zM3.500 4.500h9v7h-9zM10 11.500l2.500-2.500" strokeWidth="1.200" /> },
  { name: "Ansichtsbereiche", art: <path d="M3 12l1-6 2 2 3-4 2 3 1 5M1 4V2h3M12 2h3v2M1 12v2h3M15 12v2h-3" strokeWidth="1.200" /> },
  { name: "Gespeicherte Ansichten", art: art.docEye },
  { name: "Referenzen", art: <path d="M5 5V1.500h6l3.500 3.500v9H9M10.500 2v3.500h4M11 8c0 4-5 6-8 4M1.500 9c0-4 5-6 8-3M3 9v3.500h3M10 3.500V6H7" strokeWidth="1.300" /> },
];

function RightColumn() {
  const [tab, setTab] = useState("Objekt");
  const [nav, setNav] = useState("Klassen");
  return (
    <aside className={clsx("flex w-[201px] shrink-0 flex-col border-l border-[#dcdcdc] bg-[#f0f0f0] text-[7px] text-[#333]", small)}>
      <PanelHeader title="Informationen - Objekt" help className={clsx("h-[17px]", ui)} />
      <div className={clsx("flex h-[21px] shrink-0 bg-[#e3e3e3] text-[8px] text-[#444]", ui)}>
        {infoTabs.map((t) => (
          <button key={t.name} type="button" onClick={() => setTab(t.name)} className={clsx("flex items-center gap-[3px] px-1", tab === t.name && "bg-[#f2f2f2]")}>
            <Icon className="size-[14px]">{t.art}</Icon>
            {t.name}
          </button>
        ))}
      </div>
      <p className={clsx("h-[20px] shrink-0 border-b border-[#dadada] pt-1 pl-[2px] text-[8px] font-bold", ui)}>Nichts aktiv</p>
      <p className="flex-1 pt-[37px] text-center whitespace-nowrap">Mit dem eingestellten Filter sind keine Elemente verfügbar.</p>
      <label className="flex h-4 shrink-0 items-center justify-between border-t border-[#dadada] pt-px pl-[3px] text-[#aaa]">
        Name:
        <input disabled className="h-[14px] w-[173px] border border-[#c6c6c6] bg-[#ececec]" />
      </label>
      <div className="mt-px h-[3px] shrink-0 bg-[#c6c6c6]" />
      <PanelHeader title="Navigation - Klassen" help className={clsx("h-[18px]", ui)} />
      <div className="flex h-[21px] shrink-0 bg-[#e3e3e3]">
        {navTabs.map((t) => (
          <button key={t.name} type="button" aria-label={t.name} onClick={() => setNav(t.name)} className={clsx("flex w-[26px] items-center justify-center", nav === t.name && "bg-[#f2f2f2]")}>
            <Icon className="size-[15px]">{t.art}</Icon>
          </button>
        ))}
      </div>
      <div className="mt-[7px] flex h-[15px] shrink-0 items-center">
        <label htmlFor="darstellung" className="w-11 pl-[3px]">Darstellung:</label>
        <Drop id="darstellung" value="Zeigen, ausrichten und bearbeiten" className="h-[15px] flex-1" />
      </div>
      <div className="mt-[7px] flex h-[15px] shrink-0 items-center">
        <label htmlFor="filter" className="w-11 pl-[3px]">Filter:</label>
        <Drop id="filter" value="<Alle Klassen>" className="h-[15px] flex-1" />
      </div>
      <SearchBox name="Klassen suchen" className="mt-[7px] h-[15px] shrink-0" />
      <div className="mx-px mt-[9px] flex h-[163px] shrink-0 bg-white">
        <table className="h-full w-full table-fixed border-collapse text-left">
          <colgroup>
            <col className="w-3" />
            <col className="w-[11px]" />
            <col className="w-[11px]" />
            <col className="w-[18px]" />
            <col />
          </colgroup>
          <thead>
            <tr className="h-[13px] border-b border-[#bbb] bg-[#e9e9e9]">
              <th colSpan={3} className="border-r border-[#cfcfcf] pl-1 font-normal">Status</th>
              <th className="border-r border-[#cfcfcf]" />
              <th className="pl-[3px] font-normal">Klasse</th>
            </tr>
          </thead>
          <tbody>
            {["Bemaßung", "Keine"].map((name) => (
              <tr key={name} className="h-[11px] leading-[11px]">
                <td className="border-r border-[#aaa]"><Icon className="size-[10px]">{art.eye}</Icon></td>
                <td className="border-r border-[#aaa]" />
                <td className="border-r-2 border-[#c4c4c4]" />
                <td>{name === "Keine" && <Icon className="ml-[6px] size-[7px]"><path d="M2 8l4 5 8-10" strokeWidth="2" /></Icon>}</td>
                <td className={clsx("pl-[14px]", name === "Keine" && "font-bold text-black")}>{name}</td>
              </tr>
            ))}
            <tr>
              <td className="border-r border-[#aaa]" />
              <td className="border-r border-[#aaa]" />
              <td className="border-r-2 border-[#c4c4c4]" />
              <td />
              <td />
            </tr>
          </tbody>
        </table>
      </div>
      <div className="mx-px flex h-[11px] shrink-0 bg-[#e3e3e3]">
        <ScrollButton dir="left" />
        <div className="flex-[137] border border-[#cfcfcf] bg-white" />
        <div className="flex-[38]" />
        <ScrollButton dir="right" />
      </div>
    </aside>
  );
}

/* ---------- dialog ---------- */

function Expander({ open, name }: { open?: boolean; name: string }) {
  return (
    <button type="button" aria-label={name} aria-expanded={!!open} className="shrink-0">
      <svg viewBox="0 0 7 7" className="size-[7px]" fill="none" stroke="#aaa" aria-hidden="true">
        <path d="M.5.5h6v6h-6z" />
        <path d={open ? "M2 3.500h3" : "M2 3.500h3M3.500 2v3"} stroke="#444" />
      </svg>
    </button>
  );
}

function TreeRow({ className, children }: { className?: string; children: ReactNode }) {
  return (
    <div role="treeitem" className={clsx("flex min-h-0 items-center overflow-visible whitespace-nowrap", className)}>
      {children}
    </div>
  );
}

function Tree({ name, top, thumb, rest, children }: { name: string; top: string; thumb: string; rest: string; children: ReactNode }) {
  return (
    <div className="mt-[2px] flex h-[243px] border border-[#d9d9d9] bg-white">
      <div role="tree" aria-label={name} className="grid min-w-0 flex-1 auto-rows-fr pb-px pl-px">
        {children}
      </div>
      <div className="flex w-[11px] shrink-0 flex-col bg-[#e3e3e3]">
        <ScrollButton dir="up" />
        <div className={top} />
        <div className={clsx("border border-[#cfcfcf] bg-white", thumb)} />
        <div className={rest} />
        <ScrollButton dir="down" />
      </div>
    </div>
  );
}

function ToolTree() {
  return (
    <Tree name="Werkzeuge" top="flex-[118]" thumb="flex-[100]" rest="flex-[0]">
      {["Relationen", "Rendern", "Scripts"].map((n) => (
        <TreeRow key={n} className="gap-2 pl-2"><Expander name={n} open={n === "Scripts"} />{n}</TreeRow>
      ))}
      {scripts.map((s) => (
        <TreeRow key={s.name} className="bg-[#cccccc] pl-10">
          <label className="flex h-full items-center">
            <span className="relative mr-px size-[9px]">
              <input type="checkbox" defaultChecked className="peer block size-[9px] appearance-none bg-white" />
              <Icon className="pointer-events-none absolute inset-px size-[7px] opacity-0 peer-checked:opacity-100"><path d="M2 8l4 4 8-9" strokeWidth="2" /></Icon>
            </span>
            <Icon className="mr-[3px] size-4 text-black">{s.art}</Icon>
            {s.name}
          </label>
        </TreeRow>
      ))}
      {["Spotlight", "Wände", "Zusatzfunktionen"].map((n) => (
        <TreeRow key={n} className="gap-2 pl-2"><Expander name={n} />{n}</TreeRow>
      ))}
    </Tree>
  );
}

function PaletteTree() {
  return (
    <Tree name="Paletten" top="flex-[0]" thumb="flex-[64]" rest="flex-[154]">
      {["Favoriten", "Tools"].map((n) => (
        <TreeRow key={n} className="pl-2">
          <Expander name={n} open={n === "Tools"} />
          <Icon className="mr-1 ml-[7px] size-4 text-black">{art.book}</Icon>
          {n}
        </TreeRow>
      ))}
      <TreeRow className="pl-[27px]">
        <Expander name="Util" open />
        <Icon className="mr-1 ml-[7px] size-4 text-black">{art.chest}</Icon>
        Util
      </TreeRow>
      {scripts.map((s) => (
        <TreeRow key={s.name} className="bg-[#f0f0f0] pl-[60px]">
          <Icon className="mr-1 size-4 text-black">{s.art}</Icon>
          {s.name}
        </TreeRow>
      ))}
      <TreeRow className="pl-[27px]">
        <Expander name="Konstruktion" open />
        <Icon className="mr-1 ml-2 size-4 text-black">{art.construct}</Icon>
        Konstruktion
      </TreeRow>
      <TreeRow className="pl-[60px]">
        <Icon className="mr-1 size-4 text-black">{art.wand}</Icon>
        Ähnliches aktivieren Umschalt+X
      </TreeRow>
      <TreeRow className="pl-[60px]">
        <Icon className="mr-1 size-4 text-black">{art.hand}</Icon>
        Ausschnitt verschieben
      </TreeRow>
    </Tree>
  );
}

function WorkspaceDialog() {
  const [tab, setTab] = useState("Werkzeuge");
  return (
    <div role="dialog" aria-labelledby="dialog-title" className={clsx("absolute top-[106px] left-[414px] w-[454px] border-2 border-t border-l border-[#5c8291] bg-[#f0f0f0] pb-[14px] text-[7px] text-[#333]", small)}>
      <div className={clsx("flex h-5 items-center bg-[#e6e6e6] pr-[11px] pl-[7px] text-[8px]", ui)}>
        <h2 id="dialog-title" className="flex-1 pt-[3px] font-bold text-[#444]">Arbeitsumgebung anpassen</h2>
        <button type="button" aria-label="Hilfe" className="mb-[6px] text-[9px] font-bold text-[#666]">?</button>
        <button type="button" aria-label="Schließen" className="mb-[6px] ml-6"><Icon className="size-[9px]"><path d="M2 2l12 12M14 2L2 14" /></Icon></button>
      </div>
      <div className="px-3">
        <div className="mt-1 flex h-4 items-center">
          <label htmlFor="arbeitsumgebung" className="w-[60px]">Arbeitsumgebung:</label>
          <Drop id="arbeitsumgebung" value="Landschaft" className="h-4 w-[120px]" />
        </div>
        <div role="tablist" className="mt-[6px] ml-px flex h-3">
          {["Menüs", "Werkzeuge", "Tasten"].map((t) => (
            <button
              key={t}
              type="button"
              role="tab"
              aria-selected={tab === t}
              onClick={() => setTab(t)}
              className={clsx("px-1", tab === t && "border-x border-t border-[#d9d9d9] bg-white text-[#1f6fa8]")}
            >
              {t}
            </button>
          ))}
        </div>
        <div className="ml-px h-[325px] border border-[#dcdcdc] pr-[11px] pl-[2px]">
          <div className="flex gap-[10px]">
            <div className="w-[200px]">
              <h3 className="pt-[3px] pb-[2px] leading-[14px]">Werkzeuge:</h3>
              <SearchBox name="Werkzeuge suchen" className="h-[14px]" />
              <ToolTree />
            </div>
            <div className="w-[200px]">
              <h3 className="pt-[3px] pb-[2px] leading-[14px]">Paletten:</h3>
              <SearchBox name="Paletten suchen" className="h-[14px]" />
              <PaletteTree />
              <label htmlFor="taste" className="mt-1 block leading-4">Tastenkürzel</label>
              <div className="flex gap-[10px]">
                <Drop id="taste" value="Taste" className="h-4 w-28" />
                <input aria-label="Tastenkürzel" className="h-[14px] w-7 border border-[#dcdcdc] bg-white" />
              </div>
            </div>
          </div>
        </div>
        <p className="mt-[11px] h-11 border border-[#dcdcdc] px-[3px] py-[3px] leading-[9px] whitespace-nowrap">
          Zeigt alle Paletten, Werkzeuggruppen und Werkzeuge. Ziehen Sie einen Eintrag nach rechts oder links, um dessen Position in der
          <br />
          Hierarchie zu ändern. Klicken Sie mit der rechten Maustaste auf ein Element, um ein Kontextmenü zu öffnen und das ausgewählte
          <br />
          Element zu kopieren, einzufügen oder zu löschen, oder verwenden Sie die Tasten Ctrl+C, Ctrl+V oder eine Löschentaste. Klicken Sie
          <br />
          auf ein ausgewähltes Element, um es umzubenennen.
        </p>
        <div className="mt-[7px] flex justify-end gap-[10px]">
          <button type="button" className="h-4 w-[50px] border border-[#c9c9c9] bg-white">OK</button>
          <button type="button" className="h-4 w-[50px] border border-[#c9c9c9] bg-white">Abbrechen</button>
        </div>
      </div>
      <svg viewBox="0 0 6 6" className="absolute right-[6px] bottom-[4px] size-[6px]" aria-hidden="true">
        <path d="M0 5h1v1H0zM2 3h1v3H2zM4 1h1v5H4z" fill="#bbb" />
      </svg>
    </div>
  );
}

/* ---------- bottom ---------- */

function Taskbar() {
  return (
    <footer className="flex h-8 shrink-0 items-center bg-[#242424] pr-[13px] pl-[10px] text-white">
      <Slot name="Start" className="w-6"><svg viewBox="0 0 16 16" className="size-4" aria-hidden="true"><path d="M0 0h7.700v7.700H0zM8.300 0H16v7.700H8.300zM0 8.300h7.700V16H0zM8.300 8.300H16V16H8.300z" fill="#4cc2f5" /></svg></Slot>
      <button type="button" className="ml-[5px] flex h-[21px] w-[66px] items-center gap-[2px] rounded-full bg-[#333] pl-[15px] text-[9px]">
        <Icon className="size-3"><g strokeWidth="1.500">{art.search}</g></Icon>
        Suche
      </button>
      <Slot name="Aufgabenansicht" className="ml-[7px] w-5"><svg viewBox="0 0 16 16" className="size-4" aria-hidden="true"><path d="M0 6h11v8H0z" fill="#777" /><path d="M4 2h12v8H4z" fill="#eee" /></svg></Slot>
      <Slot name="Chrome" className="ml-[9px] w-5">
        <svg viewBox="0 0 16 16" className="size-4" aria-hidden="true">
          <circle cx="8" cy="8" r="8" fill="#f7c51e" />
          <path d="M1.070 4A8 8 0 0 1 14.930 4H8a4 4 0 0 0-3.460 6z" fill="#e0453a" />
          <path d="M1.070 4A8 8 0 0 0 8 16l3.460-6a4 4 0 0 1-6.920 0z" fill="#2fa14f" />
          <circle cx="8" cy="8" r="4" fill="#fff" />
          <circle cx="8" cy="8" r="3.100" fill="#4285e8" />
        </svg>
      </Slot>
      <Slot name="Explorer" className="ml-[9px] w-5"><svg viewBox="0 0 16 16" className="size-4" aria-hidden="true"><path d="M0 1.500h6l1.500 2H16V15H0z" fill="#eeb735" /><path d="M0 5h16v10H0z" fill="#fcd65d" /><path d="M3 10h10v5H3z" fill="#2d7fc0" /></svg></Slot>
      <Slot name="OBS" className="ml-[9px] w-5">
        <svg viewBox="0 0 18 18" className="size-[18px] shrink-0" aria-hidden="true">
          <circle cx="8.500" cy="9.500" r="7" fill="#222" stroke="#ccc" />
          <path d="M8 9c-3-1-3-4-1-5M9 10c3-2 5 0 4 3M8 10c0 3-3 4-5 2" stroke="#ccc" fill="none" strokeWidth="1.500" />
          <circle cx="14.500" cy="3.500" r="3.500" fill="#e00000" />
        </svg>
        <span className="absolute -bottom-1 h-px w-1 bg-[#aaa]" />
      </Slot>
      <button type="button" aria-label="Vectorworks" className="relative ml-[6px] flex h-[26px] w-[26px] items-center justify-center rounded-sm bg-[#363636]">
        <svg viewBox="0 0 16 16" className="size-4" aria-hidden="true"><circle cx="8" cy="8" r="7" fill="#000" stroke="#fff" /><path d="M5 5l3 6 3-6" fill="none" stroke="#fff" strokeWidth="1.600" /></svg>
        <span className="absolute bottom-0 h-[2px] w-[10px] bg-[#4cb4ec]" />
      </button>
      <Slot name="Weitere Symbole" className="ml-auto w-[22px]"><Icon className="size-[11px]"><path d="M3 10l5-5 5 5" strokeWidth="1.800" /></Icon></Slot>
      <Slot name="Fernwartung" className="w-[21px]"><svg viewBox="0 0 12 12" className="size-[11px]" aria-hidden="true"><path d="M0 0h12v12H0z" fill="#c2124c" /><path d="M3 4h5.500v5.500M3 4v1M8 4.500L4 8.500V7M4 8.500h2" stroke="#fff" fill="none" /></svg></Slot>
      <Slot name="Drive" className="w-[22px]"><svg viewBox="0 0 12 12" className="size-[11px]" aria-hidden="true"><rect width="12" height="12" rx="1.500" fill="#fff" /><path d="M6 2.500L3 8" stroke="#2fa14f" strokeWidth="2" /><path d="M6 2.500l3.500 6" stroke="#f7c51e" strokeWidth="2" /><path d="M2.500 9h7" stroke="#4285e8" strokeWidth="2" /></svg></Slot>
      <Slot name="R" className="w-[21px]"><span className="flex size-[11px] items-center justify-center rounded-sm bg-[#c4181f] font-['Open_Sans'] text-[8px] font-bold">R.</span></Slot>
      <Slot name="USB" className="w-[21px]"><Icon className="size-3"><path d="M5 2h5v4H5zM4 6h7v8H4zM13 9v4l-2 2" /></Icon></Slot>
      <Slot name="OneDrive" className="w-[22px]"><svg viewBox="0 0 12 12" className="size-3" aria-hidden="true"><path d="M1 7c0-4 7-5 8-1l-1 3H1z" fill="#c9c4b8" /><circle cx="9" cy="8.500" r="2.800" fill="#f5d400" /><path d="M9 7v2" stroke="#222" /></svg></Slot>
      <Slot name="Sicherheit" className="w-[22px]"><svg viewBox="0 0 12 12" className="size-3" aria-hidden="true"><path d="M5.500 1l4.500 1.500V6c0 2-2 4-4.500 5C3 10 1 8 1 6V2.500z" fill="#3a9bd8" /><circle cx="8.500" cy="8.500" r="3" fill="#35b558" /><path d="M7 8.500l1 1 2-2" stroke="#fff" fill="none" /></svg></Slot>
      <Slot name="Suche" className="w-[21px] text-[#e07422]"><Icon className="size-[13px]"><circle cx="9.500" cy="6" r="4" strokeWidth="2.200" /><path d="M6.500 9l-5 5" strokeWidth="2.500" /></Icon></Slot>
      <Slot name="Mikrofon" className="w-[21px] text-[#7fb3cc]"><Icon className="size-[13px]"><rect x="6" y="1.500" width="4" height="8" rx="2" fill="currentColor" /><path d="M3.500 7c0 6 9 6 9 0M8 12v3" /></Icon></Slot>
      <Slot name="Netzwerk" className="w-[20px]"><Icon className="size-[13px]"><path d="M10 3H2v9h12V9M5 14.500h6M11.500 2h3v4h-3zM13 6v3" strokeWidth="1.300" /></Icon></Slot>
      <Slot name="Lautstärke" className="w-[15px]"><Icon className="size-[13px]"><path d="M1 6h3l4-3.500v11L4 10H1zM10 6c1 1 1 3 0 4M12 4c2 2 2 6 0 8M14 2.500c2.500 3 2.500 8 0 11" /></Icon></Slot>
      <div className="ml-[6px] flex w-10 flex-col items-end text-[8px] leading-[11px] whitespace-nowrap">
        <time>11:24</time>
        <time>01.10.2025</time>
      </div>
    </footer>
  );
}

export default function App() {
  return (
    <div className={clsx("relative flex h-screen flex-col overflow-hidden bg-[#f0f0f0] text-[8px] leading-[12px]", ui)}>
      <TitleAndMenu />
      <MainToolbar />
      <ModeBar />
      <div className="flex min-h-0 flex-1">
        <LeftColumn />
        <Workspace />
        <RightColumn />
      </div>
      <div className="flex h-[18px] shrink-0 items-center pl-[3px] text-[#444]">
        <span>Aktivieren</span>
        <b className="mx-1 text-[#333]">X:</b>
        <span className="flex-1">Auswahl durch Rechteck</span>
        <span className="w-[70px]">x: -15,050m</span>
        <span className="w-[122px]">y: 10,900m</span>
      </div>
      <Taskbar />
      <WorkspaceDialog />
      <svg viewBox="0 0 10 15" className="pointer-events-none absolute top-[461px] left-[785px] h-[15px] w-[10px]" aria-hidden="true">
        <path d="M1 1v10.500l2.500-2.300 2 4.300 1.500-.7-2-4.200h3.500z" fill="#fff" stroke="#555" />
      </svg>
    </div>
  );
}
